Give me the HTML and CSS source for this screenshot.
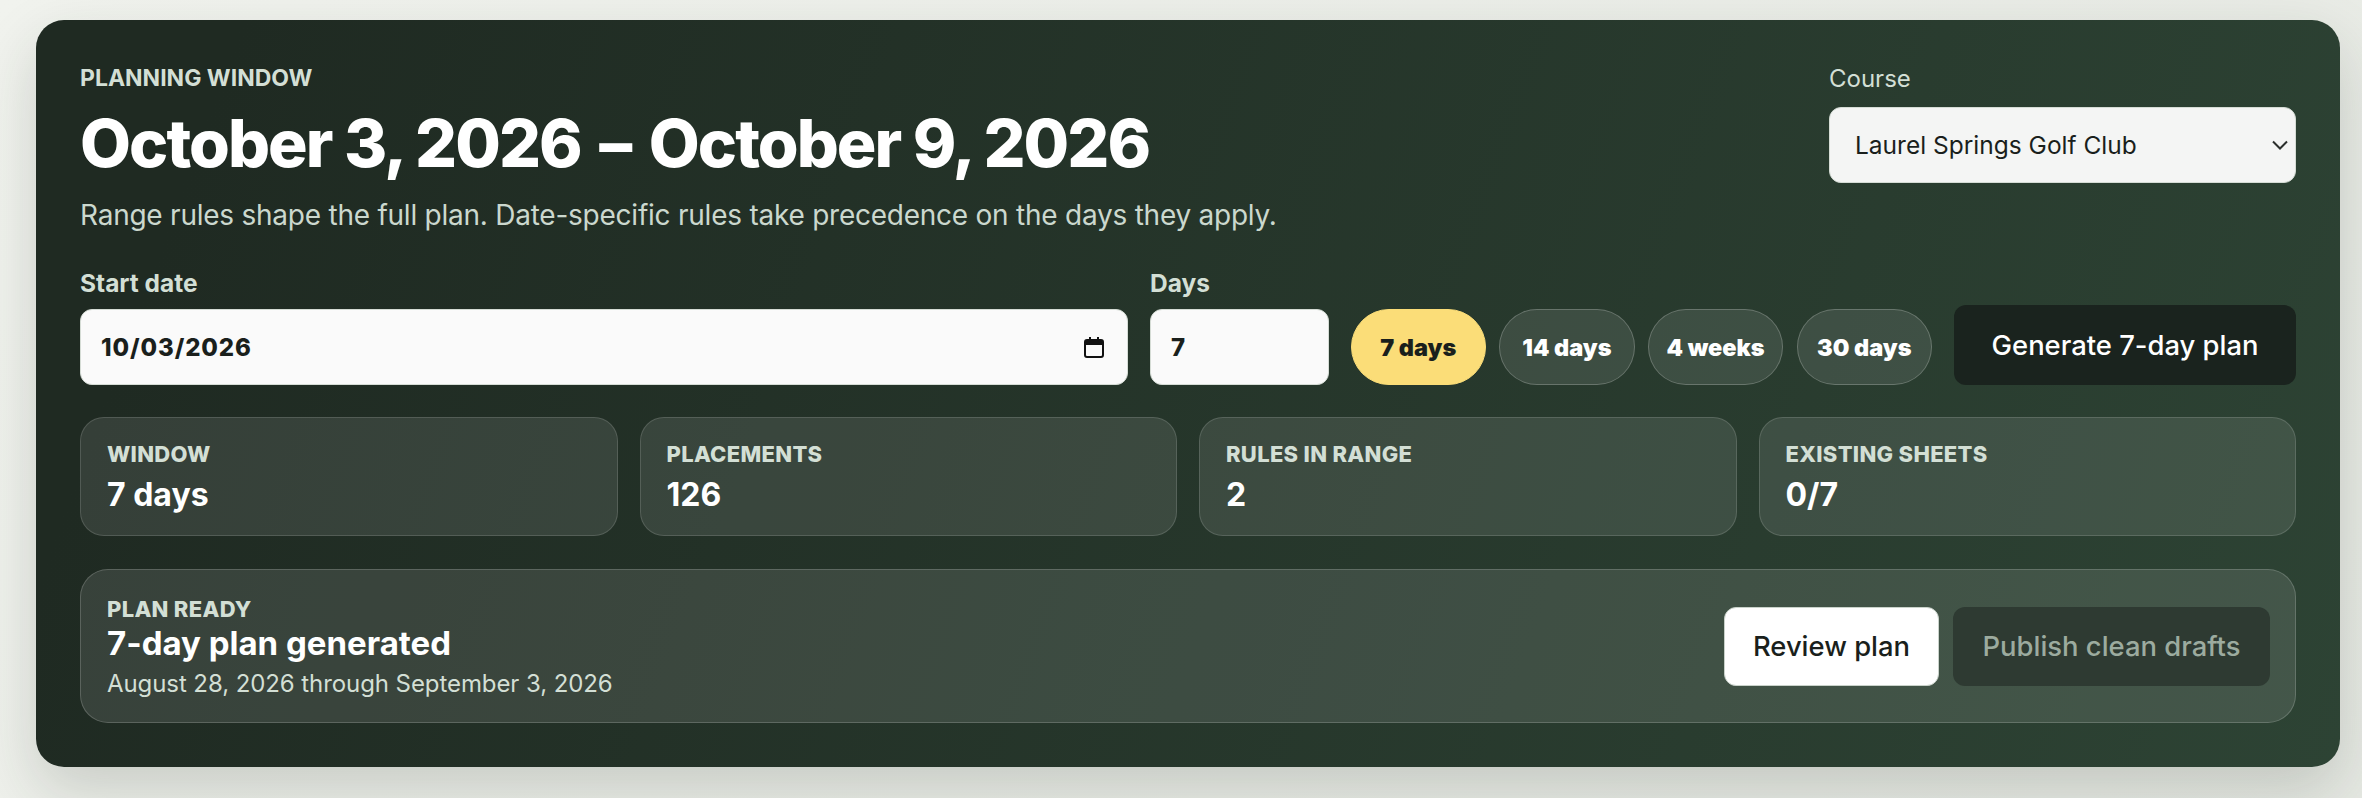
FILE: index.html
```html
<!DOCTYPE html>
<html lang="en">
<head>
    <meta charset="UTF-8">
    <title>Planning Window</title>
    <link rel="stylesheet" href="styles.css">
</head>
<body>
    <section class="panel">
        <div class="panel-top">
            <div class="intro">
                <div class="eyebrow">PLANNING WINDOW</div>
                <h1>October 3, 2026 <span class="dash">–</span> October 9, 2026</h1>
                <p class="sub">Range rules shape the full plan. Date-specific rules take precedence on the days they apply.</p>
            </div>
            <div class="course">
                <label for="course">Course</label>
                <div class="select-wrap">
                    <select id="course">
                        <option>Laurel Springs Golf Club</option>
                    </select>
                    <svg class="chevron" viewBox="0 0 16 10"><path d="M1 1.5l7 7 7-7" fill="none" stroke="#2b2f2c" stroke-width="2"/></svg>
                </div>
            </div>
        </div>

        <div class="controls">
            <div class="field field-date">
                <label>Start date</label>
                <div class="input date-input">
                    <span>10/03/2026</span>
                    <svg class="cal" viewBox="0 0 20 21"><path fill="#111" fill-rule="evenodd" d="M5 0h2v2h6V0h2v2h2a3 3 0 0 1 3 3v13a3 3 0 0 1-3 3H3a3 3 0 0 1-3-3V5a3 3 0 0 1 3-3h2zM2 8v10a1 1 0 0 0 1 1h14a1 1 0 0 0 1-1V8z"/></svg>
                </div>
            </div>
            <div class="field field-days">
                <label for="days">Days</label>
                <input class="input" id="days" type="text" value="7">
            </div>
            <div class="pills">
                <button class="pill active">7 days</button>
                <button class="pill">14 days</button>
                <button class="pill">4 weeks</button>
                <button class="pill">30 days</button>
            </div>
            <button class="btn btn-generate">Generate 7-day plan</button>
        </div>

        <div class="stats">
            <div class="stat"><div class="stat-label">WINDOW</div><div class="stat-value">7 days</div></div>
            <div class="stat"><div class="stat-label">PLACEMENTS</div><div class="stat-value">126</div></div>
            <div class="stat"><div class="stat-label">RULES IN RANGE</div><div class="stat-value">2</div></div>
            <div class="stat"><div class="stat-label">EXISTING SHEETS</div><div class="stat-value">0/7</div></div>
        </div>

        <div class="ready">
            <div class="ready-text">
                <div class="stat-label">PLAN READY</div>
                <div class="ready-title">7-day plan generated</div>
                <div class="ready-dates">August 28, 2026 through September 3, 2026</div>
            </div>
            <div class="ready-actions">
                <button class="btn btn-review">Review plan</button>
                <button class="btn btn-publish" disabled>Publish clean drafts</button>
            </div>
        </div>
    </section>
</body>
</html>
```

FILE: styles.css
```css
* {
    box-sizing: border-box;
}
body {
    margin: 0;
    height: 798px;
    overflow: hidden;
    padding: 20px 22px 0 36px;
    font-family: Inter, "Liberation Sans", sans-serif;
    background: linear-gradient(135deg, #f1f3ee, #e6e9e3);
}
.panel {
    height: 747px;
    padding: 44px 44px 0;
    border-radius: 28px;
    background: linear-gradient(110deg, #1f2a22 8%, #2d4334);
    box-shadow: 0 24px 60px rgba(31, 42, 34, 0.18);
    color: #fff;
}
.panel-top {
    display: flex;
    justify-content: space-between;
    height: 205px;
}
.eyebrow {
    font-size: 23px;
    line-height: 28px;
    font-weight: 700;
    color: #d3dfd5;
}
h1 {
    margin: 15px 0 0;
    font-size: 66px;
    line-height: 72px;
    font-weight: 800;
    letter-spacing: -1.95px;
}
.dash {
    margin: 0 6px;
}
.sub {
    margin: 18px 0 0;
    font-size: 28px;
    line-height: 36px;
    letter-spacing: -0.24px;
    color: #cbd8ce;
}
.course {
    width: 467px;
}
.course label {
    display: block;
    font-size: 24px;
    line-height: 30px;
    color: #d3dfd5;
    margin-bottom: 13px;
}
.select-wrap {
    position: relative;
}
select {
    width: 100%;
    height: 76px;
    padding: 0 25px;
    border: 1px solid #d5dcd5;
    border-radius: 12px;
    appearance: none;
    background: #f4f5f4;
    font-family: inherit;
    font-size: 24.5px;
    color: #1a1f1c;
}
.chevron {
    position: absolute;
    right: 8px;
    top: 33px;
    width: 16px;
    height: 10px;
}
.controls {
    display: flex;
    align-items: flex-end;
    gap: 22px;
}
.field label {
    display: block;
    font-size: 24.5px;
    line-height: 28px;
    font-weight: 700;
    color: #d3dfd5;
    margin-bottom: 12px;
}
.field-date {
    width: 1048px;
}
.field-days {
    width: 178.5px;
}
.input {
    width: 100%;
    height: 76px;
    padding: 0 20px;
    border: 1px solid #d5dcd5;
    border-radius: 12px;
    background: #fafafa;
    font-family: inherit;
    font-size: 24px;
    letter-spacing: 0.9px;
    font-weight: 800;
    color: #1a1f1c;
}
.date-input {
    display: flex;
    align-items: center;
    justify-content: space-between;
    padding-right: 23px;
}
.cal {
    width: 20px;
    height: 21px;
}
.pills {
    display: flex;
    gap: 13.2px;
}
.pill {
    width: 135.5px;
    height: 76px;
    padding: 0;
    border: 1px solid rgba(255, 255, 255, 0.22);
    border-radius: 38px;
    background: rgba(255, 255, 255, 0.1);
    font-family: inherit;
    font-size: 23.5px;
    font-weight: 900;
    color: #fff;
}
.pill.active {
    background: #fbdd78;
    border-color: #fbdd78;
    color: #1a1f1c;
}
.btn {
    height: 79px;
    border: 0;
    border-radius: 12px;
    font-family: inherit;
    font-size: 27.4px;
    font-weight: 450;
}
.btn-generate {
    flex: 1;
    height: 80px;
    background: #1a231e;
    color: #fff;
}
.stats {
    display: grid;
    grid-template-columns: repeat(4, 1fr);
    gap: 22px;
    margin-top: 32px;
}
.stat {
    height: 119px;
    padding: 23px 26px;
    border: 1px solid rgba(255, 255, 255, 0.14);
    border-radius: 24px;
    background: rgba(255, 255, 255, 0.1);
}
.stat-label {
    font-size: 22px;
    line-height: 26px;
    letter-spacing: 0.3px;
    font-weight: 800;
    color: #d3dfd5;
}
.stat-value {
    margin-top: 7px;
    font-size: 32px;
    line-height: 42px;
    font-weight: 700;
}
.ready {
    display: flex;
    align-items: center;
    justify-content: space-between;
    height: 154px;
    margin-top: 33px;
    padding: 0 25px 0 26px;
    border: 1px solid rgba(255, 255, 255, 0.18);
    border-radius: 28px;
    background: rgba(255, 255, 255, 0.11);
}
.ready-text {
    padding-top: 3px;
}
.ready-title {
    margin-top: 1px;
    font-size: 33px;
    line-height: 40px;
    font-weight: 700;
}
.ready-dates {
    margin-top: 6px;
    font-size: 24px;
    line-height: 30px;
    letter-spacing: -0.08px;
    color: #d3dfd5;
}
.ready-actions {
    display: flex;
    gap: 14px;
}
.btn-review {
    width: 215px;
    border: 1px solid #c9d2ca;
    background: #fff;
    color: #1a1f1c;
}
.btn-publish {
    width: 317px;
    background: #2e3a32;
    color: #9cab9f;
}
```
